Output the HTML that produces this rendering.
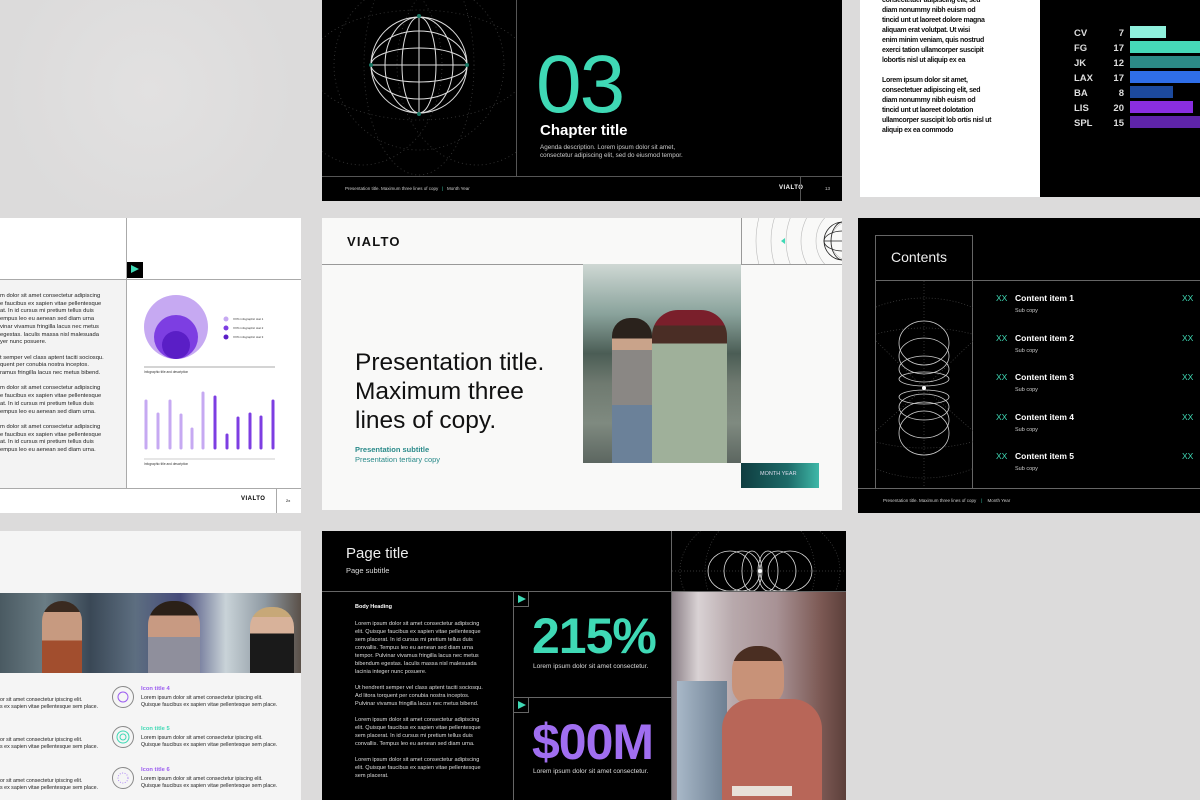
<!DOCTYPE html>
<html><head><meta charset="utf-8"><style>
*{margin:0;padding:0;box-sizing:border-box}
body{width:1200px;height:800px;overflow:hidden;background:#dcdbdb;font-family:"Liberation Sans",Arial,sans-serif;position:relative}
.s{position:absolute;overflow:hidden}
.a{position:absolute}
.t{position:absolute;white-space:nowrap}
.blk{background:#000;color:#fff}
.tx{font-size:6.3px;line-height:10px;color:#222}
.hl{position:absolute;height:1px;background:#555}
.vl{position:absolute;width:1px;background:#555}
.arr{position:absolute;width:16px;height:16px;background:#000;border:1px solid #666}
.arr:after{content:"";position:absolute;left:4px;top:3px;border-left:8px solid #3fd9b5;border-top:4.5px solid transparent;border-bottom:4.5px solid transparent}
</style></head><body>
<div class="a" style="left:0;top:0;width:320px;height:210px;background:radial-gradient(circle at 150px 90px,#e2e1e1,#dcdbdb 70%)"></div>

<!-- Slide 1 -->
<div class="s blk" style="left:322px;top:0;width:520px;height:201px">
<svg class="a" style="left:0;top:0" width="195" height="176" viewBox="0 0 195 176">
<g fill="none" stroke="#3a3a3a" stroke-dasharray="1 3" stroke-width="0.8">
<ellipse cx="97" cy="65" rx="110" ry="55"/><ellipse cx="97" cy="65" rx="55" ry="110"/><ellipse cx="97" cy="65" rx="85" ry="85"/><ellipse cx="40" cy="65" rx="80" ry="100"/><ellipse cx="155" cy="65" rx="80" ry="100"/></g>
<g fill="none" stroke="#ddd" stroke-width="1">
<circle cx="97" cy="65" r="48"/><ellipse cx="97" cy="65" rx="34" ry="48"/><ellipse cx="97" cy="65" rx="17" ry="48"/><line x1="97" y1="17" x2="97" y2="113"/>
<ellipse cx="97" cy="65" rx="48" ry="34"/><ellipse cx="97" cy="65" rx="48" ry="17"/><line x1="49" y1="65" x2="145" y2="65"/></g>
<g fill="#1a7a66"><circle cx="97" cy="16" r="2"/><circle cx="97" cy="114" r="2"/><circle cx="49" cy="65" r="2"/><circle cx="145" cy="65" r="2"/></g>
</svg>
<div class="vl" style="left:194px;top:0;height:176px"></div>
<div class="hl" style="left:0;top:176px;width:520px"></div>
<div class="t" style="left:214px;top:40px;font-size:82px;line-height:90px;color:#3fd9b5;letter-spacing:-2px">03</div>
<div class="t" style="left:218px;top:122px;font-size:15px;font-weight:bold">Chapter title</div>
<div class="t" style="left:218px;top:144px;font-size:6.3px;line-height:8px;color:#ccc">Agenda description. Lorem ipsum dolor sit amet,<br>consectetur adipiscing elit, sed do eiusmod tempor.</div>
<div class="t" style="left:23px;top:186px;font-size:4.5px;color:#ccc">Presentation title. Maximum three lines of copy &nbsp; <span style="color:#3fd9b5">|</span> &nbsp; Month Year</div>
<div class="t" style="left:457px;top:185px;font-size:6px;font-weight:bold;letter-spacing:.5px">VIALTO</div>
<div class="vl" style="left:478px;top:176px;height:25px"></div>
<div class="t" style="left:503px;top:186px;font-size:4.5px;color:#ccc">13</div>
</div>

<!-- Slide 2 -->
<div class="s" style="left:860px;top:0;width:340px;height:197px;background:#fff">
<div class="t" style="left:22px;top:-4px;font-size:7px;line-height:10px;font-weight:bold;color:#111;letter-spacing:-.3px">consectetuer adipiscing elit, sed<br>diam nonummy nibh euism od<br>tincid unt ut laoreet dolore magna<br>aliquam erat volutpat. Ut wisi<br>enim minim veniam, quis nostrud<br>exerci tation ullamcorper suscipit<br>lobortis nisl ut aliquip ex ea<br><br>Lorem ipsum dolor sit amet,<br>consectetuer adipiscing elit, sed<br>diam nonummy nibh euism od<br>tincid unt ut laoreet dolotation<br>ullamcorper suscipit lob ortis nisl ut<br>aliquip ex ea commodo</div>
<div class="a blk" style="left:180px;top:0;width:160px;height:197px">
<div class="t" style="left:34px;top:26px;font-size:9.5px;line-height:15px;font-weight:bold;color:#ddd">CV<br>FG<br>JK<br>LAX<br>BA<br>LIS<br>SPL</div>
<div class="t" style="left:66px;top:26px;width:18px;text-align:right;font-size:9.5px;line-height:15px;font-weight:bold;color:#ddd">7<br>17<br>12<br>17<br>8<br>20<br>15</div>
<div class="a" style="left:90px;top:26px;width:36px;height:12px;background:#8ff0dc"></div>
<div class="a" style="left:90px;top:41px;width:76px;height:12px;background:#46d9b8"></div>
<div class="a" style="left:90px;top:56px;width:80px;height:12px;background:#2c8a86"></div>
<div class="a" style="left:90px;top:71px;width:76px;height:12px;background:#2f6ee8"></div>
<div class="a" style="left:90px;top:86px;width:43px;height:12px;background:#1c4a9e"></div>
<div class="a" style="left:90px;top:101px;width:63px;height:12px;background:#8a2ee0"></div>
<div class="a" style="left:90px;top:116px;width:80px;height:12px;background:#5e24a8"></div>
</div>
</div>

<!-- Slide 3 -->
<div class="s" style="left:0;top:218px;width:301px;height:295px;background:#fff">
<div class="a" style="left:0;top:61px;width:126px;height:209px;background:#f3f3f3"></div>
<div class="hl" style="left:0;top:61px;width:301px;background:#aaa"></div>
<div class="vl" style="left:126px;top:0;height:270px;background:#aaa"></div>
<div class="hl" style="left:0;top:270px;width:301px;background:#aaa"></div>
<div class="arr" style="left:127px;top:44px;border:none"></div>
<div class="t tx" style="left:0;top:75px;font-size:5.8px;line-height:7.7px">m dolor sit amet consectetur adipiscing<br>e faucibus ex sapien vitae pellentesque<br>at. In id cursus mi pretium tellus duis<br>empus leo eu aenean sed diam urna<br>vinar vivamus fringilla lacus nec metus<br>egestas. Iaculis massa nisl malesuada<br>yer nunc posuere.<br><br>t semper vel class aptent taciti sociosqu.<br>quent per conubia nostra inceptos.<br>ramus fringilla lacus nec metus bibend.<br><br>m dolor sit amet consectetur adipiscing<br>e faucibus ex sapien vitae pellentesque<br>at. In id cursus mi pretium tellus duis<br>empus leo eu aenean sed diam urna.<br><br>m dolor sit amet consectetur adipiscing<br>e faucibus ex sapien vitae pellentesque<br>at. In id cursus mi pretium tellus duis<br>empus leo eu aenean sed diam urna.</div>
<svg class="a" style="left:140px;top:75px" width="150" height="175">
<circle cx="36" cy="34" r="32" fill="#c6a9f2"/><circle cx="36" cy="44" r="22" fill="#7d3ee2"/><circle cx="36" cy="52" r="14" fill="#5a1ec6"/>
<circle cx="86" cy="26" r="2.5" fill="#c6a9f2"/><circle cx="86" cy="35" r="2.5" fill="#7d3ee2"/><circle cx="86" cy="44" r="2.5" fill="#5a1ec6"/>
<g font-size="3" fill="#333"><text x="93" y="27">XX% infographic stat 1</text><text x="93" y="36">XX% infographic stat 2</text><text x="93" y="45">XX% infographic stat 3</text></g>
<line x1="4" y1="74" x2="135" y2="74" stroke="#aaa"/><text x="4" y="80" font-size="3.2" fill="#333">Infographic title and description</text>
<g stroke-width="3" stroke-linecap="round">
<line x1="6" y1="108" x2="6" y2="155" stroke="#c6a9f2"/><line x1="18" y1="121" x2="18" y2="155" stroke="#c6a9f2"/><line x1="30" y1="108" x2="30" y2="155" stroke="#c6a9f2"/><line x1="41" y1="122" x2="41" y2="155" stroke="#c6a9f2"/><line x1="52" y1="136" x2="52" y2="155" stroke="#c6a9f2"/><line x1="63" y1="100" x2="63" y2="155" stroke="#c6a9f2"/><line x1="75" y1="104" x2="75" y2="155" stroke="#7d3ee2"/><line x1="87" y1="142" x2="87" y2="155" stroke="#7d3ee2"/><line x1="98" y1="125" x2="98" y2="155" stroke="#7d3ee2"/><line x1="110" y1="121" x2="110" y2="155" stroke="#7d3ee2"/><line x1="121" y1="124" x2="121" y2="155" stroke="#7d3ee2"/><line x1="133" y1="108" x2="133" y2="155" stroke="#7d3ee2"/></g>
<line x1="4" y1="166" x2="135" y2="166" stroke="#ccc"/><text x="4" y="172" font-size="3.2" fill="#333">Infographic title and description</text>
</svg>
<div class="t" style="left:241px;top:278px;font-size:6px;font-weight:bold;letter-spacing:.5px">VIALTO</div>
<div class="vl" style="left:276px;top:270px;height:25px;background:#aaa"></div>
<div class="t" style="left:286px;top:280px;font-size:4px">2x</div>
</div>

<!-- Slide 4 -->
<div class="s" style="left:322px;top:218px;width:520px;height:292px;background:#f9f9f8">
<div class="t" style="left:25px;top:16px;font-size:13px;font-weight:bold;letter-spacing:1.2px;color:#111">VIALTO</div>
<div class="hl" style="left:0;top:46px;width:520px;background:#999"></div>
<svg class="a" style="left:419px;top:0" width="101" height="46">
<g fill="none" stroke="#bbb" stroke-width=".6"><circle cx="110" cy="23" r="20"/><circle cx="110" cy="23" r="35"/><circle cx="110" cy="23" r="50"/><circle cx="110" cy="23" r="65"/><circle cx="110" cy="23" r="80"/><circle cx="110" cy="23" r="95"/></g>
<g fill="none" stroke="#222" stroke-width=".8"><circle cx="102" cy="23" r="19"/><ellipse cx="102" cy="23" rx="12" ry="19"/><ellipse cx="102" cy="23" rx="19" ry="10"/><line x1="83" y1="23" x2="121" y2="23"/><line x1="102" y1="4" x2="102" y2="42"/></g>
<path d="M40 23l4-3v6z" fill="#3fd9b5"/></svg>
<div class="vl" style="left:419px;top:0;height:46px;background:#999"></div>
<div class="a" style="left:261px;top:46px;width:158px;height:199px;background:linear-gradient(180deg,#cfd8d4 0%,#8aa39c 25%,#4b5d55 45%,#6f7a70 60%,#7f8a80 80%,#5c6660 100%)"></div>
<div class="a" style="left:290px;top:100px;width:40px;height:145px;border-radius:18px 18px 0 0;background:linear-gradient(#2a221c 0 14%,#c9a38a 14% 22%,#8a8784 22% 60%,#6b8199 60%)"></div>
<div class="a" style="left:330px;top:92px;width:75px;height:153px;border-radius:26px 26px 0 0;background:linear-gradient(#7a1f2b 0 10%,#4a2d25 10% 22%,#9fb09a 22%)"></div>
<div class="t" style="left:33px;top:130px;font-size:24.5px;line-height:29px;color:#111">Presentation title.<br>Maximum three<br>lines of copy.</div>
<div class="t" style="left:33px;top:227px;font-size:7.5px;font-weight:bold;color:#2a8a8a">Presentation subtitle</div>
<div class="t" style="left:33px;top:237px;font-size:7.5px;color:#2a8a8a">Presentation tertiary copy</div>
<div class="a" style="left:419px;top:245px;width:78px;height:25px;background:linear-gradient(90deg,#0f3d40,#1d6a68 60%,#3fb8a8)"></div>
<div class="t" style="left:438px;top:253px;font-size:5.5px;color:#dde">MONTH YEAR</div>
</div>

<!-- Slide 5 -->
<div class="s blk" style="left:858px;top:218px;width:342px;height:295px">
<div class="a" style="left:17px;top:17px;width:98px;height:253px;border:1px solid #666;border-bottom:none"></div>
<div class="hl" style="left:17px;top:62px;width:325px;background:#666"></div>
<div class="hl" style="left:0;top:270px;width:342px;background:#666"></div>
<div class="t" style="left:33px;top:31px;font-size:14px;color:#eee">Contents</div>
<svg class="a" style="left:18px;top:63px" width="97" height="207">
<g fill="none" stroke="#444" stroke-dasharray="1 2" stroke-width=".7"><line x1="48" y1="0" x2="48" y2="207"/><ellipse cx="48" cy="107" rx="110" ry="90"/><ellipse cx="48" cy="107" rx="110" ry="60"/><line x1="0" y1="60" x2="48" y2="107"/><line x1="97" y1="60" x2="48" y2="107"/><line x1="0" y1="150" x2="48" y2="107"/><line x1="97" y1="150" x2="48" y2="107"/></g>
<g fill="none" stroke="#ccc" stroke-width=".8"><ellipse cx="48" cy="62" rx="25" ry="22"/><ellipse cx="48" cy="75" rx="25" ry="18"/><ellipse cx="48" cy="88" rx="25" ry="13"/><ellipse cx="48" cy="98" rx="25" ry="7"/><ellipse cx="48" cy="152" rx="25" ry="22"/><ellipse cx="48" cy="139" rx="25" ry="18"/><ellipse cx="48" cy="126" rx="25" ry="13"/><ellipse cx="48" cy="116" rx="25" ry="7"/></g><circle cx="48" cy="107" r="2" fill="#fff"/></svg>
<div class="t" style="left:138px;top:61px;font-size:8.5px;line-height:39.6px;color:#3fd9b5">XX<br>XX<br>XX<br>XX<br>XX</div>
<div class="t" style="left:324px;top:61px;font-size:8.5px;line-height:39.6px;color:#3fd9b5">XX<br>XX<br>XX<br>XX<br>XX</div>
<div class="t" style="left:157px;top:61px;font-size:8.5px;font-weight:bold;line-height:39.6px">Content item 1<br>Content item 2<br>Content item 3<br>Content item 4<br>Content item 5</div>
<div class="t" style="left:157px;top:74px;font-size:5.5px;line-height:39.6px;color:#ccc">Sub copy<br>Sub copy<br>Sub copy<br>Sub copy<br>Sub copy</div>
<div class="t" style="left:25px;top:280px;font-size:4.5px;color:#ccc">Presentation title. Maximum three lines of copy &nbsp;&nbsp; <span style="color:#3fd9b5">|</span> &nbsp;&nbsp; Month Year</div>
</div>

<!-- Slide 6 -->
<div class="s" style="left:0;top:531px;width:301px;height:269px;background:#f5f5f5">
<div class="a" style="left:0;top:62px;width:301px;height:80px;background:linear-gradient(90deg,#4a5a62 0%,#6a7c84 15%,#3a4856 30%,#5d6e80 45%,#454a7a 60%,#c9d3d8 75%,#8f9aa3 88%,#5a5048 100%)"></div>
<div class="a" style="left:42px;top:70px;width:40px;height:72px;border-radius:20px 20px 0 0;background:linear-gradient(#3a2a20 0 15%,#c79a80 15% 55%,#a24e2e 55%)"></div>
<div class="a" style="left:148px;top:70px;width:52px;height:72px;border-radius:24px 24px 0 0;background:linear-gradient(#2b2018 0 20%,#c89a82 20% 50%,#8f8f9c 50%)"></div>
<div class="a" style="left:250px;top:76px;width:44px;height:66px;border-radius:20px 20px 0 0;background:linear-gradient(#c7a878 0 15%,#d8b29a 15% 40%,#1a1a1a 40%)"></div>
<div class="t tx" style="left:0;top:166px;font-size:5.3px;line-height:7px">or sit amet consectetur ipiscing elit.<br>s ex sapien vitae pellentesque sem place.</div>
<div class="t tx" style="left:0;top:206px;font-size:5.3px;line-height:7px">or sit amet consectetur ipiscing elit.<br>s ex sapien vitae pellentesque sem place.</div>
<div class="t tx" style="left:0;top:247px;font-size:5.3px;line-height:7px">or sit amet consectetur ipiscing elit.<br>s ex sapien vitae pellentesque sem place.</div>
<svg class="a" style="left:111px;top:153px" width="26" height="110"><g fill="none" stroke-width="1"><circle cx="12" cy="13" r="10.5" stroke="#888"/><circle cx="12" cy="13" r="5" stroke="#9b5cf0"/><circle cx="12" cy="53" r="10.5" stroke="#888"/><circle cx="12" cy="53" r="6" stroke="#3fd9b5"/><circle cx="12" cy="53" r="3" stroke="#3fd9b5"/><circle cx="12" cy="94" r="10.5" stroke="#888"/><circle cx="12" cy="94" r="5" stroke="#b08af5" stroke-dasharray="1 1.5"/></g></svg>
<div class="t" style="left:141px;top:155px;font-size:5.8px;font-weight:bold;color:#9b5cf0">Icon title 4</div>
<div class="t" style="left:141px;top:195px;font-size:5.8px;font-weight:bold;color:#3fd9b5">Icon title 5</div>
<div class="t" style="left:141px;top:236px;font-size:5.8px;font-weight:bold;color:#9b5cf0">Icon title 6</div>
<div class="t tx" style="left:141px;top:164px;font-size:5.3px;line-height:7px">Lorem ipsum dolor sit amet consectetur ipiscing elit.<br>Quisque faucibus ex sapien vitae pellentesque sem place.</div>
<div class="t tx" style="left:141px;top:204px;font-size:5.3px;line-height:7px">Lorem ipsum dolor sit amet consectetur ipiscing elit.<br>Quisque faucibus ex sapien vitae pellentesque sem place.</div>
<div class="t tx" style="left:141px;top:245px;font-size:5.3px;line-height:7px">Lorem ipsum dolor sit amet consectetur ipiscing elit.<br>Quisque faucibus ex sapien vitae pellentesque sem place.</div>
</div>

<!-- Slide 7 -->
<div class="s blk" style="left:322px;top:531px;width:524px;height:269px">
<div class="t" style="left:24px;top:14px;font-size:15px;color:#eee">Page title</div>
<div class="t" style="left:24px;top:35px;font-size:7.5px;color:#ddd">Page subtitle</div>
<div class="hl" style="left:0;top:60px;width:524px;background:#666"></div>
<div class="vl" style="left:349px;top:0;height:269px;background:#666"></div>
<div class="vl" style="left:191px;top:60px;height:209px;background:#666"></div>
<div class="hl" style="left:191px;top:166px;width:158px;background:#666"></div>
<div class="arr" style="left:191px;top:60px"></div>
<div class="arr" style="left:191px;top:166px"></div>
<svg class="a" style="left:350px;top:0" width="174" height="60">
<g fill="none" stroke="#444" stroke-dasharray="1 2" stroke-width=".7"><line x1="0" y1="40" x2="174" y2="40"/><ellipse cx="88" cy="40" rx="80" ry="60"/><ellipse cx="88" cy="40" rx="55" ry="60"/></g>
<g fill="none" stroke="#ddd" stroke-width=".8"><ellipse cx="58" cy="40" rx="22" ry="20"/><ellipse cx="70" cy="40" rx="18" ry="20"/><ellipse cx="80" cy="40" rx="10" ry="20"/><ellipse cx="118" cy="40" rx="22" ry="20"/><ellipse cx="106" cy="40" rx="18" ry="20"/><ellipse cx="96" cy="40" rx="10" ry="20"/></g><circle cx="88" cy="40" r="2" fill="#fff"/></svg>
<div class="t" style="left:33px;top:73px;font-size:5.5px;font-weight:bold">Body Heading</div>
<div class="t" style="left:33px;top:89px;font-size:5.6px;line-height:8px;color:#ddd">Lorem ipsum dolor sit amet consectetur adipiscing<br>elit. Quisque faucibus ex sapien vitae pellentesque<br>sem placerat. In id cursus mi pretium tellus duis<br>convallis. Tempus leo eu aenean sed diam urna<br>tempor. Pulvinar vivamus fringilla lacus nec metus<br>bibendum egestas. Iaculis massa nisl malesuada<br>lacinia integer nunc posuere.<br><br>Ut hendrerit semper vel class aptent taciti sociosqu.<br>Ad litora torquent per conubia nostra inceptos.<br>Pulvinar vivamus fringilla lacus nec metus bibend.<br><br>Lorem ipsum dolor sit amet consectetur adipiscing<br>elit. Quisque faucibus ex sapien vitae pellentesque<br>sem placerat. In id cursus mi pretium tellus duis<br>convallis. Tempus leo eu aenean sed diam urna.<br><br>Lorem ipsum dolor sit amet consectetur adipiscing<br>elit. Quisque faucibus ex sapien vitae pellentesque<br>sem placerat.</div>
<div class="t" style="left:210px;top:76px;font-size:50px;font-weight:bold;color:#3fd9b5;letter-spacing:-1px">215%</div>
<div class="t" style="left:211px;top:132px;font-size:6.5px;color:#ddd">Lorem ipsum dolor sit amet consectetur.</div>
<div class="t" style="left:210px;top:182px;font-size:50px;font-weight:bold;color:#a06ef0;letter-spacing:-1px">$00M</div>
<div class="t" style="left:211px;top:237px;font-size:6.5px;color:#ddd">Lorem ipsum dolor sit amet consectetur.</div>
<div class="a" style="left:350px;top:61px;width:174px;height:208px;background:linear-gradient(90deg,#8a7f86 0%,#d9d2d4 15%,#b8a9ac 35%,#a89295 60%,#7d5a55 85%,#5c3f3a 100%)"></div>
<div class="a" style="left:355px;top:150px;width:50px;height:119px;background:linear-gradient(90deg,#a8b8c8,#6d7f92)"></div>
<div class="a" style="left:410px;top:115px;width:52px;height:60px;border-radius:24px 24px 20px 20px;background:linear-gradient(#4a2e22 0 25%,#c89278 25%)"></div>
<div class="a" style="left:400px;top:168px;width:100px;height:101px;border-radius:30px 30px 0 0;background:#b86658"></div>
<div class="a" style="left:410px;top:255px;width:60px;height:10px;background:#e8e0d8"></div>
</div>
</body></html>
